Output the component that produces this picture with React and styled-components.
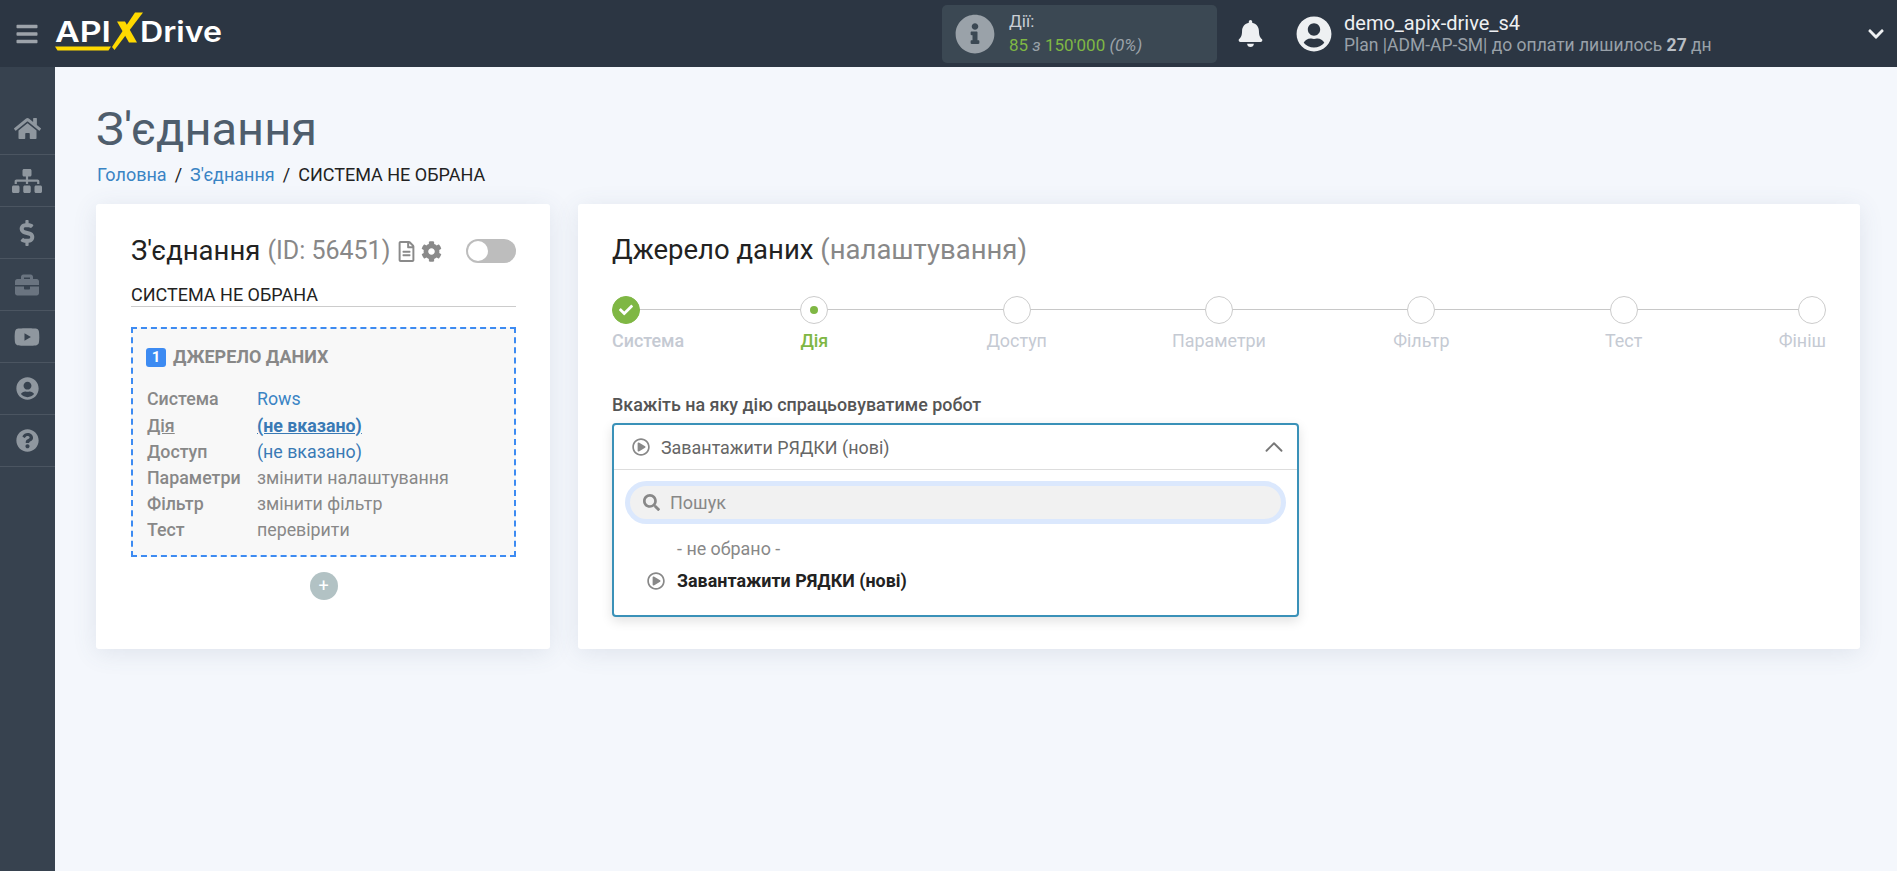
import React from "react";
import styled, { createGlobalStyle } from "styled-components";
import {
  FaHome, FaSitemap, FaDollarSign, FaBriefcase, FaYoutube, FaUserCircle, FaQuestionCircle,
  FaBell, FaInfoCircle, FaCheck, FaCog, FaRegFileAlt, FaChevronDown, FaBars, FaRegPlayCircle, FaSearch,
} from "react-icons/fa";
import { ChevronUp } from "lucide-react";

const Global = createGlobalStyle`
  html, body { margin: 0; padding: 0; height: 100%; overflow: hidden; }
  body { font-family: Roboto, "Liberation Sans", sans-serif; background: #f4f7fc; color: #222; }
  * { box-sizing: border-box; }
`;

const Page = styled.div`display: flex; flex-direction: column; height: 871px;`;
const Header = styled.header`
  height: 67px; flex: none; background: #2c3643; display: flex; align-items: center; color: #fff;
`;
const Burger = styled.button`
  width: 55px; height: 67px; padding: 0 1px 0 0; border: 0; background: none; color: #9da3aa;
  display: flex; align-items: center; justify-content: center; font-size: 24px;
`;
const Logo = styled.svg`display: block; width: 172px; height: 44px; flex: none;`;
const LogoText = styled.text`font-family: Inter, "Open Sans", sans-serif; font-weight: 600; font-size: 29px; fill: #fff;`;
const HeaderRight = styled.div`margin-left: auto; display: flex; align-items: center; height: 100%;`;
const Stats = styled.div`
  width: 275px; height: 58px; border-radius: 5px; background: #3b4853; display: flex; align-items: center;
  padding-left: 13px; gap: 14px;
`;
const StatsIcon = styled.div`color: #9aa2a9; font-size: 40px; display: flex;`;
const StatsText = styled.div`font-size: 17px; line-height: 24px; color: #c9ced3; margin-top: -2px;`;
const StatsValue = styled.div`color: #7fb744; font-size: 17px;`;
const Muted = styled.i`color: #9aa2a9;`;
const Bell = styled.div`margin: 0 32px 0 20px; color: #eef0f2; font-size: 27px; display: flex;`;
const Avatar = styled.div`color: #eef0f2; font-size: 36px; display: flex; margin-right: 12px;`;
const UserBlock = styled.div`width: 511px; line-height: 22px;`;
const UserName = styled.div`font-size: 20px; color: #eef0f2;`;
const UserPlan = styled.div`font-size: 17.5px; color: #99a1a9; b { font-weight: 700; color: #b9bec4; }`;
const Caret = styled.div`width: 42px; color: #eef0f2; font-size: 18px; display: flex; align-items: center; padding-left: 12px;`;

const Body = styled.div`flex: 1; display: flex; min-height: 0;`;
const Side = styled.nav`width: 55px; flex: none; background: #37424f; padding-top: 36px;`;
const SideItem = styled.div`
  height: 52px; border-bottom: 1px solid #4b5561; display: flex; align-items: center; justify-content: center;
  padding-right: 1px;
  color: ${p => (p.$dim ? "#6a7480" : "#8f979f")}; font-size: ${p => p.$size}px;
`;
const Main = styled.main`flex: 1; min-width: 0; padding: 34px 37px 0 41px;`;
const Title = styled.h1`margin: 0; font-weight: 400; font-size: 47px; line-height: 56px; color: #4e5d6c;`;
const Crumbs = styled.div`margin: 6px 0 0 1px; font-size: 18px; line-height: 24px; display: flex; gap: 8px; color: #222;`;
const Crumb = styled.a`color: #3a84c4;`;
const Cards = styled.div`display: flex; gap: 28px; margin-top: 17px;`;
const Card = styled.section`
  background: #fff; border-radius: 3px; height: 445px; box-shadow: 0 4px 24px rgba(70, 90, 120, .12);
  width: ${p => p.$w || "auto"}; flex: ${p => (p.$w ? "none" : 1)}; padding: ${p => p.$pad};
`;
const CardTitle = styled.div`display: flex; align-items: center; font-size: 27.5px; line-height: 36px; color: #222;`;
const Gray = styled.span`color: #888;`;
const IdText = styled.span`color: #888; font-size: 25px; margin-left: 7px;`;
const TinyIcon = styled.span`color: #8a8a8a; font-size: 21px; display: flex; margin-left: ${p => p.$ml}px;`;
const Toggle = styled.div`
  margin-left: auto; width: 50px; height: 24px; border-radius: 12px; background: #bdbdbd; padding: 2px;
  &::before { content: ""; display: block; width: 20px; height: 20px; border-radius: 50%; background: #fff; }
`;
const SubName = styled.div`margin-top: 12px; font-size: 18px; line-height: 28px; height: 26px; border-bottom: 1px solid #ccc; color: #222;`;
const Source = styled.div`
  margin-top: 20px; height: 230px; border: 2px dashed #3d8bf2; background: #f8f8f8; padding: 17px 14px;
`;
const SourceHead = styled.div`display: flex; align-items: center; gap: 7px; font-size: 18px; font-weight: 700; color: #888; line-height: 22px; margin-bottom: 18px;`;
const Num = styled.span`
  width: 20px; height: 19px; margin-left: -1px; border-radius: 3px; background: #3d8bf2; color: #fff; font-size: 15px;
  display: flex; align-items: center; justify-content: center;
`;
const Row = styled.div`display: flex; font-size: 17.8px; line-height: 26px; &:nth-child(2) { margin-bottom: 1px; }`;
const RowLabel = styled.span`width: 110px; flex: none; font-weight: 500; color: #888; text-decoration: ${p => (p.$u ? "underline" : "none")};`;
const RowValue = styled.span`
  color: ${p => p.$c || "#888"}; font-weight: ${p => (p.$b ? 700 : 400)};
  text-decoration: ${p => (p.$b ? "underline" : "none")};
`;
const Add = styled.div`
  width: 28px; height: 28px; border-radius: 50%; background: #b2c2c4; color: #fff; margin: 15px auto 0;
  display: flex; align-items: center; justify-content: center; font-size: 18px; line-height: 1;
`;

const Heading = styled.div`font-size: 27.5px; line-height: 36px; color: #222;`;
const Steps = styled.div`position: relative; display: flex; justify-content: space-between; margin-top: 28px; height: 60px;`;
const Rail = styled.div`position: absolute; left: 14px; right: 14px; top: 13px; height: 1px; background: #c8c8c8;`;
const Step = styled.div`
  position: relative; width: 0; display: flex; flex-direction: column;
  align-items: ${p => (p.$a === "l" ? "flex-start" : p.$a === "r" ? "flex-end" : "center")};
`;
const Dot = styled.div`
  width: 28px; height: 28px; flex: none; border-radius: 50%; background: ${p => (p.$done ? "#7fb744" : "#fff")};
  border: 1px solid ${p => (p.$done ? "#7fb744" : "#ccc")}; display: flex; align-items: center; justify-content: center;
  color: #fff; font-size: 14px;
  &::after { content: ""; display: ${p => (p.$active ? "block" : "none")}; width: 8px; height: 8px; border-radius: 50%; background: #7fb744; }
`;
const StepLabel = styled.div`
  margin-top: 4px; font-size: 17.9px; line-height: 26px; white-space: nowrap;
  color: ${p => (p.$active ? "#7fb744" : "#c5cad3")}; font-weight: ${p => (p.$b ? 500 : 400)};
`;
const FieldLabel = styled.div`margin-top: 37px; font-size: 17.9px; line-height: 24px; font-weight: 500; color: #555;`;
const Select = styled.div`
  margin-top: 6px; width: 687px; height: 194px; border: 2px solid #3a91b8; border-radius: 4px; background: #fff;
  box-shadow: 0 4px 12px rgba(0, 0, 0, .12);
`;
const SelectHead = styled.div`
  height: 45px; border-bottom: 1px solid #ddd; display: flex; align-items: center; padding: 0 8px 0 18px;
  gap: 11px; font-size: 17.9px; color: #666;
`;
const PlayIcon = styled.span`color: #888; font-size: 18px; display: flex;`;
const Chevron = styled.span`margin-left: auto; color: #777; display: flex;`;
const Search = styled.div`
  margin: 11px 11px 0 11px; height: 43px; border: 5px solid #dbe8fd; border-radius: 22px; background: #f1f1f1;
  display: flex; align-items: center; padding-left: 13px; gap: 10px; font-size: 18px; color: #888;
`;
const SearchIcon = styled.span`color: #888; font-size: 17px; display: flex;`;
const Option = styled.div`
  display: flex; align-items: center; font-size: 17.9px; line-height: 32px; padding-left: ${p => p.$pl}px; gap: 12px;
  color: ${p => (p.$b ? "#222" : "#888")}; font-weight: ${p => (p.$b ? 700 : 400)}; margin-top: ${p => p.$mt || 0}px;
`;

const steps = ["Система", "Дія", "Доступ", "Параметри", "Фільтр", "Тест", "Фініш"];
const rows = [
  ["Система", "Rows", "#3a84c4"],
  ["Дія", "(не вказано)", "#3a7ab5", true],
  ["Доступ", "(не вказано)", "#3a7ab5"],
  ["Параметри", "змінити налаштування"],
  ["Фільтр", "змінити фільтр"],
  ["Тест", "перевірити"],
];

export default function App() {
  return (
    <Page>
      <Global />
      <Header>
        <Burger aria-label="menu"><FaBars /></Burger>
        <Logo viewBox="0 0 172 44">
          <LogoText x="0" y="30" textLength="56" lengthAdjust="spacingAndGlyphs">API</LogoText>
          <path d="M0 34.5h56l-2.5 4H2.5z" fill="#ffd900" />
          <path d="M62 9.5h8l12 21h-8z" fill="#ffd900" />
          <path d="M80 .5h8L59.5 38l-2.5-3z" fill="#ffd900" />
          <LogoText x="85" y="30" textLength="82" lengthAdjust="spacingAndGlyphs">Drive</LogoText>
        </Logo>
        <HeaderRight>
          <Stats>
            <StatsIcon><FaInfoCircle /></StatsIcon>
            <StatsText>
              Дії:
              <StatsValue>85 <Muted>з</Muted> 150'000 <Muted>(0%)</Muted></StatsValue>
            </StatsText>
          </Stats>
          <Bell><FaBell /></Bell>
          <Avatar><FaUserCircle /></Avatar>
          <UserBlock>
            <UserName>demo_apix-drive_s4</UserName>
            <UserPlan>Plan |ADM-AP-SM| до оплати лишилось <b>27</b> дн</UserPlan>
          </UserBlock>
          <Caret><FaChevronDown /></Caret>
        </HeaderRight>
      </Header>
      <Body>
        <Side>
          <SideItem $size={27}><FaHome /></SideItem>
          <SideItem $size={30}><FaSitemap /></SideItem>
          <SideItem $size={26}><FaDollarSign /></SideItem>
          <SideItem $size={24} $dim><FaBriefcase /></SideItem>
          <SideItem $size={26}><FaYoutube /></SideItem>
          <SideItem $size={23}><FaUserCircle /></SideItem>
          <SideItem $size={23}><FaQuestionCircle /></SideItem>
        </Side>
        <Main>
          <Title>З'єднання</Title>
          <Crumbs>
            <Crumb>Головна</Crumb><span>/</span><Crumb>З'єднання</Crumb><span>/</span><span>СИСТЕМА НЕ ОБРАНА</span>
          </Crumbs>
          <Cards>
            <Card $w="454px" $pad="29px 34px 0 35px">
              <CardTitle>
                З'єднання<IdText>(ID: 56451)</IdText>
                <TinyIcon $ml={6}><FaRegFileAlt /></TinyIcon>
                <TinyIcon $ml={4}><FaCog /></TinyIcon>
                <Toggle />
              </CardTitle>
              <SubName>СИСТЕМА НЕ ОБРАНА</SubName>
              <Source>
                <SourceHead><Num>1</Num>ДЖЕРЕЛО ДАНИХ</SourceHead>
                {rows.map(([l, v, c, b]) => (
                  <Row key={l}><RowLabel $u={b}>{l}</RowLabel><RowValue $c={c} $b={b}>{v}</RowValue></Row>
                ))}
              </Source>
              <Add>+</Add>
            </Card>
            <Card $pad="28px 34px 0 34px">
              <Heading>Джерело даних <Gray>(налаштування)</Gray></Heading>
              <Steps>
                <Rail />
                {steps.map((s, i) => (
                  <Step key={s} $a={i === 0 ? "l" : i === 6 ? "r" : "c"}>
                    <Dot $done={i === 0} $active={i === 1}>{i === 0 && <FaCheck />}</Dot>
                    <StepLabel $active={i === 1} $b={i < 2}>{s}</StepLabel>
                  </Step>
                ))}
              </Steps>
              <FieldLabel>Вкажіть на яку дію спрацьовуватиме робот</FieldLabel>
              <Select>
                <SelectHead>
                  <PlayIcon><FaRegPlayCircle /></PlayIcon>
                  Завантажити РЯДКИ (нові)
                  <Chevron><ChevronUp size={30} strokeWidth={1.5} /></Chevron>
                </SelectHead>
                <Search><SearchIcon><FaSearch /></SearchIcon>Пошук</Search>
                <Option $pl={63} $mt={9}>- не обрано -</Option>
                <Option $pl={33} $b><PlayIcon><FaRegPlayCircle /></PlayIcon>Завантажити РЯДКИ (нові)</Option>
              </Select>
            </Card>
          </Cards>
        </Main>
      </Body>
    </Page>
  );
}
